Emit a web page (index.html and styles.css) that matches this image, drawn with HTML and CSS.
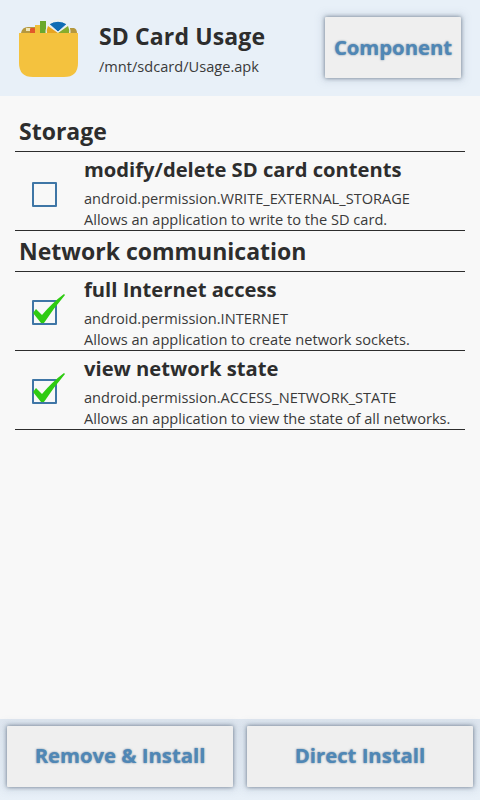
FILE: index.html
```html
<!DOCTYPE html>
<html lang="en">
<head>
    <meta charset="UTF-8">
    <meta name="viewport" content="width=device-width, initial-scale=1.0">
    <title>SD Card Usage</title>
    <link rel="stylesheet" href="styles.css">
</head>
<body>

    <div class="header">
        <svg class="app-icon" width="59" height="58" viewBox="0 0 59 58">
            <path d="M2 14 Q3 8 9 8 L16 8 L16 14 Z" fill="#b5983e"/>
            <path d="M50 14 L51 9 L55 9 Q58 10 58 14 Z" fill="#b5983e"/>
            <rect x="7" y="9" width="5" height="3" fill="#f0e6b8"/>
            <rect x="11" y="9" width="5" height="6" rx="1" fill="#e2582a"/>
            <rect x="16" y="6" width="6" height="9" fill="#f0c03a"/>
            <rect x="21" y="2" width="6" height="13" fill="#6aa82c"/>
            <circle cx="39" cy="13" r="12.5" fill="#eef0ec"/>
            <path d="M39 14 L29 7 Q27 11 28 15 L39 15 Z" fill="#e8a420"/>
            <path d="M39 14 L49 7 Q51 11 50 15 L39 15 Z" fill="#86ac2c"/>
            <path d="M39 13 L30 5 Q39 -0.5 48 5 Z" fill="#0f6cb4" stroke="#fff" stroke-width="0.8"/>
            <path d="M0 14 L59 14 L59 44 Q59 58 45 58 L14 58 Q0 58 0 44 Z" fill="#f4c23e"/>
        </svg>
        <div class="app-info">
            <div class="app-name">SD Card Usage</div>
            <div class="app-path">/mnt/sdcard/Usage.apk</div>
        </div>
        <button class="btn btn-component">Component</button>
    </div>

    <div class="content">
        <!-- Storage -->
        <div class="group-title">Storage</div>
        <div class="perm perm-off">
            <div class="check"><span class="box"></span></div>
            <div class="perm-text">
                <div class="perm-name">modify/delete SD card contents</div>
                <div class="perm-line">android.permission.WRITE_EXTERNAL_STORAGE</div>
                <div class="perm-line">Allows an application to write to the SD card.</div>
            </div>
        </div>

        <!-- Network -->
        <div class="group-title">Network communication</div>
        <div class="perm">
            <div class="check">
                <span class="box"></span>
                <svg class="tick" width="34" height="32" viewBox="0 0 34 32">
                    <path d="M1 20 L4 16 L10 22 Q20 10 32 1 L33 2 Q21 16 12 30 L9 30 Z" fill="#2ecb12"/>
                </svg>
            </div>
            <div class="perm-text">
                <div class="perm-name">full Internet access</div>
                <div class="perm-line">android.permission.INTERNET</div>
                <div class="perm-line">Allows an application to create network sockets.</div>
            </div>
        </div>
        <div class="perm">
            <div class="check">
                <span class="box"></span>
                <svg class="tick" width="34" height="32" viewBox="0 0 34 32">
                    <path d="M1 20 L4 16 L10 22 Q20 10 32 1 L33 2 Q21 16 12 30 L9 30 Z" fill="#2ecb12"/>
                </svg>
            </div>
            <div class="perm-text">
                <div class="perm-name">view network state</div>
                <div class="perm-line">android.permission.ACCESS_NETWORK_STATE</div>
                <div class="perm-line">Allows an application to view the state of all networks.</div>
            </div>
        </div>
    </div>

    <div class="footer">
        <button class="btn">Remove &amp; Install</button>
        <button class="btn">Direct Install</button>
    </div>

</body>
</html>
```

FILE: styles.css
```css
body {
    font-family: 'Open Sans', sans-serif;
    margin: 0;
    padding: 0;
    height: 800px;
    display: flex;
    flex-direction: column;
    background-color: #f8f8f8;
    color: #2d2d2d;
    overflow: hidden;
}

.header {
    height: 96px;
    display: flex;
    align-items: center;
    background-color: #e8f0f8;
    padding: 0 19px;
    box-sizing: border-box;
}

.app-icon {
    flex: none;
}

.app-info {
    flex: 1;
    margin-left: 21px;
}

.app-name {
    font-size: 23px;
    font-weight: 700;
    line-height: 30px;
    letter-spacing: 0.13px;
}

.app-path {
    font-size: 14.6px;
    line-height: 20px;
    margin-top: 5px;
    color: #3a3a3a;
}

.btn {
    font-family: 'Open Sans', sans-serif;
    font-size: 20.3px;
    font-weight: 700;
    color: #4f87b6;
    text-shadow: 0 0 2px rgba(50, 85, 120, 0.7);
    background-color: #efefef;
    border: none;
    border-radius: 1px;
    padding: 0 0 2px;
    height: 61px;
    box-shadow: 0 0 4px rgba(70, 85, 105, 0.75), 0 0 8px 3px rgba(120, 140, 165, 0.18);
}

.btn-component {
    flex: none;
    width: 136px;
    margin-top: -1px;
}

.content {
    flex: 1;
    padding: 15px 15px 0;
}

.group-title {
    font-size: 23px;
    font-weight: 700;
    line-height: 31px;
    padding: 5px 0 4px 4px;
    border-bottom: 1px solid #2d2d2d;
}

.perm {
    display: flex;
    height: 78px;
    border-bottom: 1px solid #2d2d2d;
}

.check {
    flex: none;
    position: relative;
    width: 69px;
    display: flex;
    align-items: center;
    padding-left: 17px;
    box-sizing: border-box;
}

.box {
    width: 21px;
    height: 21px;
    border: 2px solid #3f76a6;
    border-radius: 1px;
    margin-top: 3px;
    filter: blur(0.3px);
}

.perm-off .box {
    margin-top: 7px;
}

.tick {
    position: absolute;
    left: 17px;
    top: 21px;
    filter: blur(0.4px);
}

.perm-text {
    flex: 1;
    padding-top: 3px;
}

.perm-name {
    font-size: 20.2px;
    font-weight: 700;
    line-height: 28px;
    margin-bottom: 5px;
}

.perm-line {
    font-size: 14.6px;
    line-height: 21px;
    color: #3a3a3a;
    white-space: nowrap;
}

.footer {
    height: 81px;
    display: flex;
    justify-content: space-between;
    align-items: center;
    padding: 0 7px 6px;
    box-sizing: border-box;
    background: linear-gradient(#dfe7f0, #e8f0f8);
}

.footer .btn {
    width: 226px;
    padding-bottom: 4px;
}
```
